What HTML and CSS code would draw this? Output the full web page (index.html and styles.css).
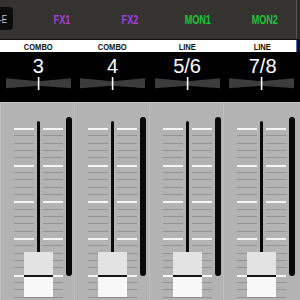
FILE: index.html
```html
<!DOCTYPE html>
<html lang="en">

<head>
    <meta charset="UTF-8">
    <meta name="viewport" content="width=device-width, initial-scale=1.0">
    <title>Mixer</title>
    <link rel="stylesheet" href="styles.css">
</head>

<body>
    <div id="mixer">
        <div class="tabs">
            <div class="tab tab-active"><span>-E</span></div>
            <div class="tab tab-fx"><span>FX1</span></div>
            <div class="tab tab-fx"><span>FX2</span></div>
            <div class="tab tab-mon"><span>MON1</span></div>
            <div class="tab tab-mon"><span>MON2</span></div>
        </div>

        <div class="channels">
            <div class="channel">
                <div class="ch-type"><span>COMBO</span></div>
                <div class="ch-head">
                    <div class="ch-num">3</div>
                    <svg class="pan" viewBox="0 0 65 13">
                        <polygon points="0,1.3 32.5,4.3 65,1.3 65,11.3 32.5,8.7 0,11.3" fill="#3c3c3c" />
                        <rect x="31.8" y="0" width="1.6" height="13" fill="#fff" />
                    </svg>
                </div>
                <div class="ch-fader">
                    <div class="ticks"></div>
                    <div class="track"></div>
                    <div class="ticks"></div>
                    <div class="meter"></div>
                    <div class="cap">
                        <div class="cap-top"></div>
                        <div class="cap-line"></div>
                        <div class="cap-bottom"></div>
                    </div>
                </div>
            </div>

            <div class="channel">
                <div class="ch-type"><span>COMBO</span></div>
                <div class="ch-head">
                    <div class="ch-num">4</div>
                    <svg class="pan" viewBox="0 0 65 13">
                        <polygon points="0,1.3 32.5,4.3 65,1.3 65,11.3 32.5,8.7 0,11.3" fill="#3c3c3c" />
                        <rect x="31.8" y="0" width="1.6" height="13" fill="#fff" />
                    </svg>
                </div>
                <div class="ch-fader">
                    <div class="ticks"></div>
                    <div class="track"></div>
                    <div class="ticks"></div>
                    <div class="meter"></div>
                    <div class="cap">
                        <div class="cap-top"></div>
                        <div class="cap-line"></div>
                        <div class="cap-bottom"></div>
                    </div>
                </div>
            </div>

            <div class="channel">
                <div class="ch-type"><span>LINE</span></div>
                <div class="ch-head">
                    <div class="ch-num">5/6</div>
                    <svg class="pan" viewBox="0 0 65 13">
                        <polygon points="0,1.3 32.5,4.3 65,1.3 65,11.3 32.5,8.7 0,11.3" fill="#3c3c3c" />
                        <rect x="31.8" y="0" width="1.6" height="13" fill="#fff" />
                    </svg>
                </div>
                <div class="ch-fader">
                    <div class="ticks"></div>
                    <div class="track"></div>
                    <div class="ticks"></div>
                    <div class="meter"></div>
                    <div class="cap">
                        <div class="cap-top"></div>
                        <div class="cap-line"></div>
                        <div class="cap-bottom"></div>
                    </div>
                </div>
            </div>

            <div class="channel">
                <div class="ch-type"><span>LINE</span></div>
                <div class="ch-head">
                    <div class="ch-num">7/8</div>
                    <svg class="pan" viewBox="0 0 65 13">
                        <polygon points="0,1.3 32.5,4.3 65,1.3 65,11.3 32.5,8.7 0,11.3" fill="#3c3c3c" />
                        <rect x="31.8" y="0" width="1.6" height="13" fill="#fff" />
                    </svg>
                </div>
                <div class="ch-fader">
                    <div class="ticks"></div>
                    <div class="track"></div>
                    <div class="ticks"></div>
                    <div class="meter"></div>
                    <div class="cap">
                        <div class="cap-top"></div>
                        <div class="cap-line"></div>
                        <div class="cap-bottom"></div>
                    </div>
                </div>
            </div>
        </div>
    </div>
</body>

</html>
```

FILE: styles.css
```css
body {
    margin: 0;
    padding: 0;
    background-color: #000;
    font-family: "Liberation Sans", Arial, sans-serif;
}

#mixer {
    width: 300px;
    height: 300px;
    overflow: hidden;
}

/* top tab bar */
.tabs {
    display: flex;
    height: 40px;
    padding-top: 7px;
    box-sizing: border-box;
    background-color: #353330;
    border-bottom: 1px solid #151515;
    box-shadow: inset -3px 0 #2b2a28, inset -4px 0 #55544f;
    overflow: hidden;
}

.tab {
    flex: none;
    width: 36.4px;
    height: 23px;
    margin: 0 15.55px;
    padding-top: 2px;
    box-sizing: border-box;
    line-height: 21px;
    font-size: 13px;
    font-weight: bold;
    text-align: center;
    white-space: nowrap;
}

.tab span {
    display: inline-block;
    transform: scaleX(0.7);
}

.tab:first-child {
    margin-left: -23.7px;
}

.tab-active {
    background-color: #0c0c0c;
    border-radius: 4px;
    color: #c9c9c9;
    font-size: 11px;
    font-weight: normal;
    text-align: right;
    padding-right: 5.7px;
}

.tab-active span {
    transform: scaleX(0.72);
    transform-origin: right center;
}

.tab-fx {
    color: #a040dc;
}

.tab-mon {
    color: #20c23e;
}

/* channel strips */
.channels {
    display: grid;
    grid-template-columns: repeat(3, 74.44px) 1fr;
}

.ch-type {
    height: 12px;
    padding: 2px 0 0 2px;
    box-sizing: border-box;
    background-color: #fff;
    color: #111;
    font-size: 9px;
    font-weight: bold;
    line-height: 10px;
    text-align: center;
}

.ch-type span {
    display: inline-block;
    transform: scaleX(0.84);
}

.channel:last-child .ch-type {
    box-shadow: inset -3px 0 #111, inset -4px 0 #4a6fc0;
}

.ch-head {
    height: 50px;
    padding-top: 4px;
    box-sizing: border-box;
    background-color: #000;
}

.ch-num {
    padding-left: 2px;
    color: #fff;
    font-size: 20px;
    line-height: 20px;
    text-align: center;
}

.pan {
    display: block;
    width: 65px;
    height: 13px;
    margin: 1px 0 0 6px;
}

.ch-fader {
    position: relative;
    display: flex;
    align-items: flex-start;
    column-gap: 3px;
    height: 198px;
    padding-left: 14px;
    box-sizing: border-box;
    background-color: #b3b3b3;
    border-top: 1px solid #c4c4c4;
    box-shadow: inset 1px 0 #bfbfbf;
}

.ticks {
    width: 20px;
    height: 175px;
    margin-top: 25px;
    background-image:
        repeating-linear-gradient(#f5f5f5 0 2px, transparent 2px 36.667px),
        repeating-linear-gradient(#939393 0 1px, transparent 1px 7.333px);
}

.track {
    width: 3px;
    height: 156px;
    margin-top: 18px;
    background-color: #0a0a0a;
    border-radius: 2px 2px 0 0;
}

.meter {
    width: 6px;
    height: 159px;
    margin-top: 14px;
    background-color: #0a0a0a;
    border-radius: 3px;
}

/* fader knob sits over the track */
.cap {
    position: absolute;
    left: 24px;
    top: 149px;
    width: 29px;
}

.cap-top {
    height: 23px;
    background-color: #e3e3e3;
}

.cap-line {
    height: 2px;
    background-color: #151515;
}

.cap-bottom {
    height: 20px;
    background-color: #f8f8f8;
    border-bottom: 1px solid #8c8c8c;
}
```
